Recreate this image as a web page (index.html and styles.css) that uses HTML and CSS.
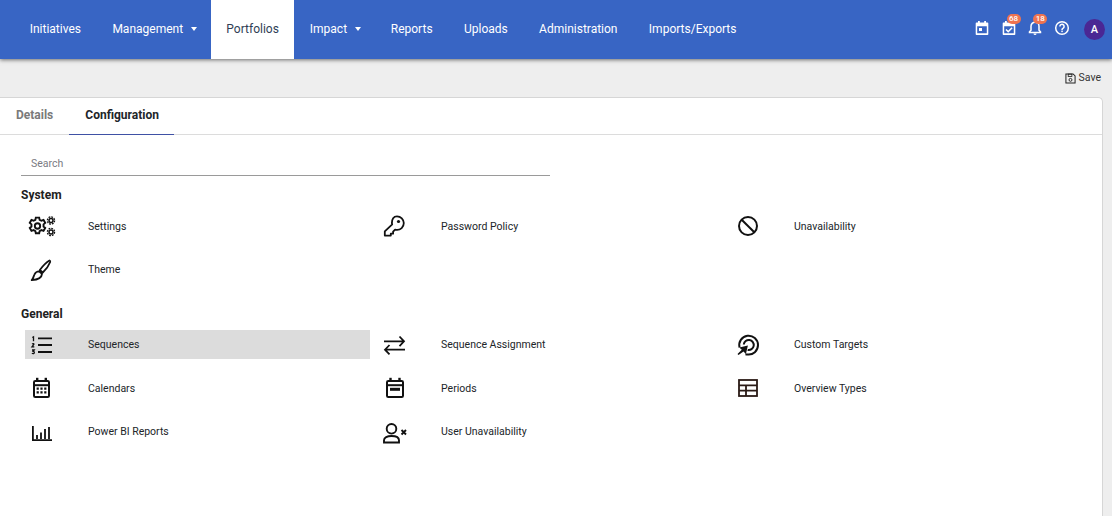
FILE: index.html
```html
<!DOCTYPE html>
<html lang="en">
<head>
<meta charset="utf-8">
<title>Portfolios Configuration</title>
<link rel="stylesheet" href="styles.css">
</head>
<body>
<header class="topbar">
  <nav class="nav">
    <a class="nav-item">Initiatives</a>
    <a class="nav-item has-caret">Management<span class="caret"></span></a>
    <a class="nav-item active">Portfolios</a>
    <a class="nav-item has-caret">Impact<span class="caret"></span></a>
    <a class="nav-item">Reports</a>
    <a class="nav-item">Uploads</a>
    <a class="nav-item">Administration</a>
    <a class="nav-item">Imports/Exports</a>
  </nav>
  <div class="tools">
    <span class="tool"><svg viewBox="0 0 16 16" class="tool-icon"><path d="M2.500 2.600h11a.8.8 0 0 1 .8.8v10.800a.8.8 0 0 1-.8.8h-11a.8.8 0 0 1-.8-.8V3.400a.8.8 0 0 1 .8-.8zM3.200 6.200v7h9.600v-7z" fill="#fff" fill-rule="evenodd"/><rect x="4" y="1" width="1.800" height="3" fill="#fff"/><rect x="10.200" y="1" width="1.800" height="3" fill="#fff"/><rect x="5" y="8" width="3" height="3" fill="#fff"/></svg></span>
    <span class="tool"><svg viewBox="0 0 16 16" class="tool-icon"><path d="M2.500 2.600h11a.8.8 0 0 1 .8.8v10.800a.8.8 0 0 1-.8.8h-11a.8.8 0 0 1-.8-.8V3.400a.8.8 0 0 1 .8-.8zM3.200 6.200v7h9.600v-7z" fill="#fff" fill-rule="evenodd"/><rect x="4" y="1" width="1.800" height="3" fill="#fff"/><path d="M5 9.500l2.200 2.200 3.900-3.900" fill="none" stroke="#fff" stroke-width="1.600"/></svg><span class="badge">68</span></span>
    <span class="tool"><svg viewBox="0 0 16 16" class="tool-icon"><path d="M8 2.200a4 4 0 0 0-4 4v4l-1.500 1.600v.7h11v-.7L12 10.200v-4a4 4 0 0 0-4-4z" fill="none" stroke="#fff" stroke-width="1.500"/><path d="M6.500 13.600h3a1.500 1.500 0 0 1-3 0z" fill="#fff"/></svg><span class="badge">18</span></span>
    <span class="tool"><svg viewBox="0 0 16 16" class="tool-icon"><circle cx="8" cy="8" r="6.300" fill="none" stroke="#fff" stroke-width="1.500"/><path d="M5.900 6.400a2.100 2.100 0 1 1 3.300 1.700c-.8.500-1.200.9-1.200 1.800" fill="none" stroke="#fff" stroke-width="1.500"/><rect x="7.300" y="10.600" width="1.500" height="1.500" fill="#fff"/></svg></span>
    <span class="avatar">A</span>
  </div>
</header>

<div class="subbar">
  <button class="save"><svg viewBox="0 0 12 12" class="save-icon"><path d="M1 1h7.800L11 3.200V11H1z" fill="none" stroke="#222" stroke-width="1.100"/><rect x="3.500" y="1.200" width="4" height="2.600" fill="none" stroke="#222" stroke-width=".9"/><circle cx="6" cy="7.500" r="1.600" fill="none" stroke="#222" stroke-width="1"/></svg>Save</button>
</div>

<main class="card">
  <div class="tabs">
    <a class="tab">Details</a>
    <a class="tab tab-active">Configuration</a>
  </div>
  <div class="panel">
    <div class="search">Search</div>

    <h2 class="group-title system-title">System</h2>
    <div class="grid">
      <a class="entry"><span class="ico ico-settings"><svg viewBox="0 0 27 24"><g fill="none" stroke="#111"><g transform="translate(8.500 12) scale(1.120) translate(-9.500 -12)" stroke-width="1.700"><circle cx="9.500" cy="12" r="2.400"/><path d="M8 4.500h3l.4 2 1.600.8 1.900-.7 1.500 2.600-1.500 1.300v2l1.500 1.300-1.500 2.600-1.900-.7-1.600.8-.4 2H8l-.4-2-1.600-.8-1.900.7-1.500-2.600 1.500-1.300v-2L2.600 9.200l1.500-2.600 1.900.7 1.600-.8z"/></g><circle cx="22" cy="6.500" r="2" stroke-width="1.500"/><circle cx="22" cy="6.500" r="3.600" stroke-width="1.300" stroke-dasharray="1.800 1"/><circle cx="22" cy="18" r="2" stroke-width="1.500"/><circle cx="22" cy="18" r="3.600" stroke-width="1.300" stroke-dasharray="1.800 1"/></g></svg></span><span>Settings</span></a>
      <a class="entry"><span class="ico"><svg viewBox="0 0 24 24"><path d="M15 2.300a6.800 6.800 0 0 1 6.800 6.800c0 4.200-3.400 6.800-6.700 6.800-.8 0-1.400-.1-2-.3l-2 2v2.100H8.800v1.900H2.800v-4.200l7.400-7c-.2-.5-.3-1-.3-1.300C9.900 5 11.500 2.300 15 2.300z" fill="none" stroke="#111" stroke-width="1.800" stroke-linejoin="round"/><circle cx="16.500" cy="7.500" r="1.600" fill="#111"/></svg></span><span>Password Policy</span></a>
      <a class="entry"><span class="ico"><svg viewBox="0 0 24 24"><circle cx="13" cy="12" r="9" fill="none" stroke="#111" stroke-width="2"/><path d="M6.700 5.700l12.600 12.600" stroke="#111" stroke-width="2"/></svg></span><span>Unavailability</span></a>
      <a class="entry"><span class="ico"><svg viewBox="0 0 24 24"><path d="M20.500 2.500c.6.300.9.900.7 1.500-1 2.500-4.500 8-7.400 10.500l-3-2.500c2.400-3.200 7-8 9.700-9.500zM10 13.300l3 2.600c-.2 3.200-3.200 5.800-10.300 6.200 1.800-1.800 1.800-3.800 2.800-5.800.8-1.700 2.800-3 4.500-3z" fill="none" stroke="#111" stroke-width="1.800" stroke-linejoin="round"/></svg></span><span>Theme</span></a>
    </div>

    <h2 class="group-title general-title">General</h2>
    <div class="grid">
      <a class="entry entry-selected"><span class="ico"><svg viewBox="0 0 24 24"><path d="M9 5.300h14M9 12h14M9 19h14" stroke="#111" stroke-width="1.800" fill="none"/><path d="M3.300 4.500l1.200-.7v4.400M3.100 11c.8-.8 2.100-.5 1.700.5L3 13.800h2.300M3 17h2.200l-1 1.300c1.500 0 1.500 2.400-.1 2.300-.5 0-.9-.1-1.100-.4" stroke="#111" stroke-width="1.300" fill="none"/></svg></span><span>Sequences</span></a>
      <a class="entry"><span class="ico"><svg viewBox="0 0 24 24"><path d="M2 8.300h19M17.500 3.500L22 8.300l-4.500 4.800M23 16.700H4M7.500 12L3 16.700l4.500 4.700" fill="none" stroke="#111" stroke-width="1.800"/></svg></span><span>Sequence Assignment</span></a>
      <a class="entry"><span class="ico"><svg viewBox="0 0 24 24"><g fill="none" stroke="#111" stroke-width="2"><path d="M4.500 14.500A9.400 9.400 0 1 1 12.500 21.500c-.9 0-1.300-.1-2-.3"/><path d="M8.800 11.500a5 5 0 1 1 3.900 5.400"/></g><path d="M3.500 22l-1-.9 4.300-4.300-2.500-2.400 8.600-2-2 8.600-2.400-2.500z" fill="#111"/></svg></span><span>Custom Targets</span></a>
      <a class="entry"><span class="ico"><svg viewBox="0 0 24 24"><rect x="5" y="5" width="15" height="16" rx="1.300" fill="none" stroke="#111" stroke-width="2"/><rect x="7" y="1.800" width="2.400" height="4" fill="#111"/><rect x="15.600" y="1.800" width="2.400" height="4" fill="#111"/><path d="M5 9.200h15" stroke="#111" stroke-width="2"/><path d="M7.600 11.600h2.200v2.200H7.600zM11.400 11.600h2.200v2.200h-2.200zM15.200 11.600h2.200v2.200h-2.200zM7.600 15.200h2.200v2.200H7.600zM11.400 15.200h2.200v2.200h-2.200zM15.200 15.200h2.200v2.200h-2.200z" fill="#111"/></svg></span><span>Calendars</span></a>
      <a class="entry"><span class="ico"><svg viewBox="0 0 24 24"><rect x="5" y="5" width="16" height="16" rx="1.300" fill="none" stroke="#111" stroke-width="2"/><rect x="7.300" y="1.800" width="2.400" height="4" fill="#111"/><rect x="16.300" y="1.800" width="2.400" height="4" fill="#111"/><path d="M5 9.200h16" stroke="#111" stroke-width="2"/><rect x="8" y="11.800" width="10" height="3" fill="#111"/></svg></span><span>Periods</span></a>
      <a class="entry"><span class="ico"><svg viewBox="0 0 24 24"><rect x="4" y="4" width="18" height="16" fill="none" stroke="#2a1a16" stroke-width="1.800"/><path d="M4 9.300h18M4 14.700h18M11 9.300V20" stroke="#2a1a16" stroke-width="1.800" fill="none"/></svg></span><span>Overview Types</span></a>
      <a class="entry"><span class="ico"><svg viewBox="0 0 24 24"><path d="M3.900 6v14.100H23" fill="none" stroke="#111" stroke-width="1.800"/><path d="M8 15v4M12 12.500v6.500M16 9v10M20 7v12" stroke="#111" stroke-width="1.800"/></svg></span><span>Power BI Reports</span></a>
      <a class="entry"><span class="ico"><svg viewBox="0 0 24 24"><circle cx="9.500" cy="8.800" r="4.800" fill="none" stroke="#111" stroke-width="1.900"/><path d="M2 22.500v-2.200c0-2.800 3.200-4.300 7.500-4.300s7.500 1.500 7.500 4.300v2.200z" fill="none" stroke="#111" stroke-width="1.900"/><path d="M19.500 10l4.500 4.500M24 10l-4.500 4.500" stroke="#111" stroke-width="1.900"/></svg></span><span>User Unavailability</span></a>
    </div>
  </div>
</main>
</body>
</html>
```
FILE: styles.css
```css
* { box-sizing: border-box; }
html, body { margin: 0; height: 100%; }
body {
  width: 1112px;
  height: 516px;
  overflow: hidden;
  background: #eeeeee;
  font-family: Roboto, "Liberation Sans", sans-serif;
  color: #212529;
  display: flex;
  flex-direction: column;
}
.topbar {
  height: 59px;
  flex: none;
  background: #3865c4;
  box-shadow: 0 1px 4px rgba(0, 0, 0, 0.55);
  display: flex;
  align-items: stretch;
  justify-content: space-between;
  padding-left: 14px;
  padding-right: 7px;
  position: relative;
}
.nav { display: flex; align-items: stretch; }
.nav-item {
  display: flex;
  align-items: center;
  padding: 0 15.700px 2px;
  font-size: 12px;
  color: #fff;
  white-space: nowrap;
}
.nav-item.has-caret { padding-right: 14px; }
.nav-item.active { background: #fff; color: #2f3e55; padding: 0 15.250px 2px; }
.caret {
  width: 0;
  height: 0;
  margin-left: 8px;
  border-left: 3px solid transparent;
  border-right: 3px solid transparent;
  border-top: 4px solid #fff;
}
.tools { display: flex; align-items: center; }
.tool {
  position: relative;
  width: 16px;
  height: 16px;
  margin-right: 10.670px;
  margin-bottom: 3px;
  display: block;
}
.tool-icon { width: 16px; height: 16px; display: block; }
.badge {
  position: absolute;
  top: -6px;
  left: 6px;
  width: 14px;
  height: 10px;
  border-radius: 5px;
  background: #ef7350;
  color: #fff;
  font-size: 8px;
  line-height: 10px;
  text-align: center;
  font-weight: 500;
}
.avatar {
  width: 21px;
  height: 21px;
  margin-left: 3.500px;
  border-radius: 50%;
  background: #4a2794;
  color: #fff;
  font-size: 11px;
  line-height: 21px;
  text-align: center;
  font-weight: 500;
}
.subbar {
  height: 38px;
  flex: none;
  display: flex;
  justify-content: flex-end;
  align-items: flex-start;
  padding-right: 11px;
  padding-top: 12px;
}
.save {
  display: flex;
  align-items: center;
  gap: 3px;
  padding: 0;
  border: 0;
  background: none;
  font: 400 10.500px/14px Roboto, "Liberation Sans", sans-serif;
  color: #333;
}
.save-icon { width: 11px; height: 11px; }
.card {
  flex: 1;
  width: 1103px;
  background: #fff;
  border: 1px solid #d6d6d6;
  border-left: 0;
  border-bottom: 0;
  border-top-right-radius: 5px;
}
.tabs {
  height: 37px;
  display: flex;
  align-items: stretch;
  border-bottom: 1px solid #dcdcdc;
}
.tab {
  padding: 0 16px 2px;
  display: flex;
  align-items: center;
  font-size: 12px;
  font-weight: 700;
  color: #7a7a7a;
}
.tab-active {
  color: #212529;
  border-bottom: 1px solid #3f51a5;
  margin-bottom: -0.5px;
  padding-right: 15.500px;
}
.panel { padding: 20px 0 0 21px; }
.search {
  width: 529px;
  height: 21px;
  padding: 2px 0 0 10px;
  font-size: 10.500px;
  line-height: 14px;
  color: #7a7a82;
  border-bottom: 1px solid #9a9a9a;
}
.group-title {
  margin: 0;
  font-size: 12px;
  line-height: 14px;
  font-weight: 700;
  color: #212121;
}
.system-title { margin-top: 12px; }
.general-title { margin-top: 23px; }
.grid {
  display: grid;
  grid-template-columns: repeat(3, 353px);
  grid-auto-rows: 29px;
  row-gap: 14.500px;
  margin: 9.500px 0 0 4px;
}
.general-title + .grid { margin-top: 9px; }
.entry {
  width: 345px;
  display: flex;
  align-items: center;
  font-size: 10.500px;
  color: #212529;
}
.entry-selected { background: #dcdcdc; }
.ico {
  width: 63px;
  flex: none;
  padding-left: 4px;
  display: flex;
  align-items: center;
}
.ico svg { width: 24px; height: 24px; display: block; overflow: visible; }
.ico-settings svg { width: 27px; }
```
